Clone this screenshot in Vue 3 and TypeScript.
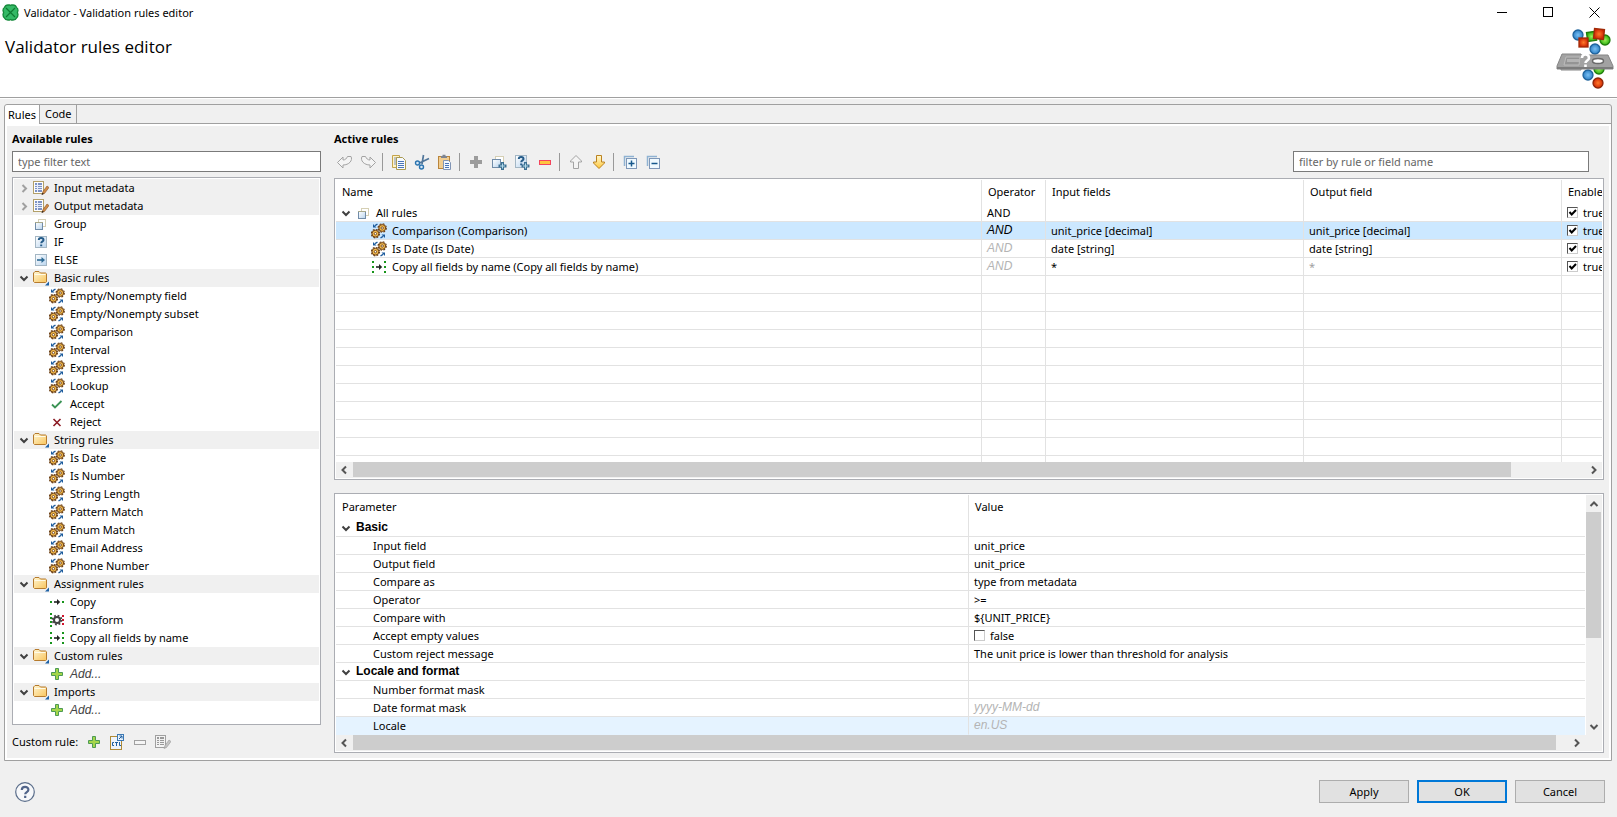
<script setup lang="ts">
import { ref } from 'vue'

interface TreeRow {
  label: string
  icon: string
  level: 0 | 1
  shaded?: boolean
  twisty?: 'open' | 'closed'
  italic?: boolean
}
interface ActiveRule {
  name: string
  icon: string
  root?: boolean
  operator: string
  opStyle?: string
  input: string
  output: string
  faintOutput?: boolean
  enabled: boolean
}
interface Param {
  label: string
  value?: string
  group?: boolean
  check?: boolean
  hint?: boolean
  hover?: boolean
}

const category = (label: string): TreeRow => ({ label, icon: 'folder', level: 0, shaded: true, twisty: 'open' })
const rule = (label: string, icon = 'gears'): TreeRow => ({ label, icon, level: 1 })
const adder = (): TreeRow => ({ label: 'Add...', icon: 'plus', level: 1, italic: true })

const tree: TreeRow[] = [
  { label: 'Input metadata', icon: 'meta', level: 0, shaded: true, twisty: 'closed' },
  { label: 'Output metadata', icon: 'meta', level: 0, shaded: true, twisty: 'closed' },
  { label: 'Group', icon: 'group', level: 0 },
  { label: 'IF', icon: 'if', level: 0 },
  { label: 'ELSE', icon: 'else', level: 0 },
  category('Basic rules'),
  rule('Empty/Nonempty field'),
  rule('Empty/Nonempty subset'),
  rule('Comparison'),
  rule('Interval'),
  rule('Expression'),
  rule('Lookup'),
  rule('Accept', 'accept'),
  rule('Reject', 'reject'),
  category('String rules'),
  rule('Is Date'),
  rule('Is Number'),
  rule('String Length'),
  rule('Pattern Match'),
  rule('Enum Match'),
  rule('Email Address'),
  rule('Phone Number'),
  category('Assignment rules'),
  rule('Copy', 'copyone'),
  rule('Transform', 'transform'),
  rule('Copy all fields by name', 'copyall'),
  category('Custom rules'),
  adder(),
  category('Imports'),
  adder(),
]

const rules = ref<ActiveRule[]>([
  { name: 'All rules', icon: 'group', root: true, operator: 'AND', input: '', output: '', enabled: true },
  { name: 'Comparison (Comparison)', icon: 'gears', operator: 'AND', opStyle: 'italic', input: 'unit_price [decimal]', output: 'unit_price [decimal]', enabled: true },
  { name: 'Is Date (Is Date)', icon: 'gears', operator: 'AND', opStyle: 'hint', input: 'date [string]', output: 'date [string]', enabled: true },
  { name: 'Copy all fields by name (Copy all fields by name)', icon: 'copyall', operator: 'AND', opStyle: 'hint', input: '*', output: '*', faintOutput: true, enabled: true },
])
const selected = ref(1)

const params: Param[] = [
  { label: 'Basic', group: true },
  { label: 'Input field', value: 'unit_price' },
  { label: 'Output field', value: 'unit_price' },
  { label: 'Compare as', value: 'type from metadata' },
  { label: 'Operator', value: '>=' },
  { label: 'Compare with', value: '${UNIT_PRICE}' },
  { label: 'Accept empty values', value: 'false', check: true },
  { label: 'Custom reject message', value: 'The unit price is lower than threshold for analysis' },
  { label: 'Locale and format', group: true },
  { label: 'Number format mask' },
  { label: 'Date format mask', value: 'yyyy-MM-dd', hint: true },
  { label: 'Locale', value: 'en.US', hint: true, hover: true },
]

const acceptEmpty = ref(false)
const treeFilter = ref('')
const ruleFilter = ref('')

const toolGroups: { icon: string; label: string; off?: boolean }[][] = [
  [{ icon: 'undo', label: 'Undo', off: true }, { icon: 'redo', label: 'Redo', off: true }],
  [{ icon: 'copy', label: 'Copy' }, { icon: 'cut', label: 'Cut' }, { icon: 'paste', label: 'Paste' }],
  [
    { icon: 'plusgrey', label: 'Add rule', off: true },
    { icon: 'addgroup', label: 'Add group' },
    { icon: 'addif', label: 'Add condition' },
    { icon: 'minusred', label: 'Remove' },
  ],
  [{ icon: 'up', label: 'Move up', off: true }, { icon: 'down', label: 'Move down' }],
  [{ icon: 'expand', label: 'Expand all' }, { icon: 'collapse', label: 'Collapse all' }],
]
const customTools = [
  { icon: 'plus', label: 'Add custom rule' },
  { icon: 'ctl', label: 'Open CTL' },
  { icon: 'minusgrey', label: 'Remove custom rule' },
  { icon: 'metagrey', label: 'Edit custom rule' },
]
</script>

<template>
  <svg class="defs" width="0" height="0" aria-hidden="true">
    <defs>
      <linearGradient id="g-folder" x1="0" y1="0" x2="1" y2="1">
        <stop offset="0" stop-color="#fff6d2" /><stop offset="1" stop-color="#f9c55d" />
      </linearGradient>
      <linearGradient id="g-gold" x1="0" y1="0" x2="0" y2="1">
        <stop offset="0" stop-color="#fff8d0" /><stop offset="1" stop-color="#ffc83a" />
      </linearGradient>
      <linearGradient id="g-blue" x1="0" y1="0" x2="1" y2="1">
        <stop offset="0" stop-color="#ffffff" /><stop offset="1" stop-color="#b9d4ee" />
      </linearGradient>
      <radialGradient id="r-red"><stop offset="0" stop-color="#ff7a2a" /><stop offset="1" stop-color="#cf2704" /></radialGradient>
      <radialGradient id="r-green"><stop offset="0" stop-color="#9bf05a" /><stop offset="1" stop-color="#2eb010" /></radialGradient>
      <radialGradient id="r-blue"><stop offset="0" stop-color="#79c0f4" /><stop offset="1" stop-color="#2d7fc4" /></radialGradient>
    </defs>
    <symbol id="i-open" viewBox="0 0 10 10"><path d="M1.500 3.500L5 7l3.500-3.500" fill="none" stroke="#404040" stroke-width="2" /></symbol>
    <symbol id="i-closed" viewBox="0 0 10 10"><path d="M3.500 2L7 5.500 3.500 9" fill="none" stroke="#a0a0a0" stroke-width="2" /></symbol>
    <symbol id="i-meta" viewBox="0 0 16 16">
      <rect x=".5" y="1.5" width="10" height="12" fill="#fff" stroke="#b3a069" />
      <path d="M2 3h7v9H2z" fill="#7d93c4" /><path d="M4.500 3v9M2 5.500h7M2 7.500h7M2 9.500h7" stroke="#e9eefa" />
      <path d="M9 14.500l1-3L14 6l2 1.500-4.500 6z" fill="#d08a45" stroke="#8a5427" stroke-width=".6" /><path d="M8.500 15l1-2.200 1.300 1z" fill="#222" />
    </symbol>
    <symbol id="i-metagrey" viewBox="0 0 16 16">
      <rect x=".5" y="1.500" width="10" height="12" fill="#f4f4f4" stroke="#a0a0a0" />
      <path d="M2 3h7v8H2z" fill="#999" /><path d="M4.500 3v8M2 5.500h7M2 7.500h7M2 9.500h7" stroke="#f0f0f0" />
      <path d="M9 14.500l1-3L14 6l2 1.500-4.500 6z" fill="#c4c4c4" stroke="#999" stroke-width=".6" />
    </symbol>
    <symbol id="i-group" viewBox="0 0 16 16">
      <rect x="5.500" y="3.500" width="7" height="7" fill="#fff" stroke="#d5cfb4" />
      <rect x="2.500" y="6.500" width="7" height="7" fill="url(#g-blue)" stroke="#718ca8" /><path d="M2 6.500h8" stroke="#a8a98d" />
    </symbol>
    <symbol id="i-if" viewBox="0 0 16 16">
      <rect x="2.500" y="2.500" width="11" height="11" fill="url(#g-blue)" stroke="#a3b6c4" />
      <path d="M5.800 6c0-3 4.700-2.400 4.700 0C10.500 7.500 8.300 7.200 8.200 9.200M8.200 10.500v1.700" fill="none" stroke="#245b88" stroke-width="2" />
    </symbol>
    <symbol id="i-else" viewBox="0 0 16 16">
      <rect x="2.500" y="2.500" width="11" height="11" fill="url(#g-blue)" stroke="#a3b6c4" />
      <path d="M4 8h6" stroke="#2d6a94" stroke-width="1.600" /><path d="M8.500 5l3.500 3-3.500 3z" fill="#2d6a94" />
    </symbol>
    <symbol id="i-folder" viewBox="0 0 16 16">
      <path d="M.5 11.500v-8.500l1.500-1.500h4l1.500 1.500h5l1 .8v8l-1 .7H1.500z" fill="url(#g-folder)" stroke="#b67b2d" />
      <path d="M1.500 4.500h11" stroke="#fffbe8" /><path d="M12 15.500h4v-4z" fill="#1c60a5" />
    </symbol>
    <symbol id="i-gears" viewBox="0 0 16 16">
      <g id="cog">
        <circle cx="11.200" cy="5" r="4.100" fill="none" stroke="#6e4116" stroke-width="1.200" stroke-dasharray="1.900 1.320" />
        <circle cx="11.200" cy="5" r="3.400" fill="#f3bb4c" stroke="#6e4116" stroke-width="1" />
        <circle cx="11.200" cy="5" r="1.200" fill="#fff" stroke="#6e4116" stroke-width=".9" />
      </g>
      <use href="#cog" x="-6.800" y="5.700" />
      <path d="M6.500 1L4 2.600" stroke="#1b5a9c" stroke-width="1.300" /><path d="M2 1v3.500h3.500z" fill="#1b5a9c" />
      <path d="M9.500 15l2.500-1.600" stroke="#1b5a9c" stroke-width="1.300" /><path d="M14 15v-3.500h-3.500z" fill="#1b5a9c" />
    </symbol>
    <symbol id="i-accept" viewBox="0 0 16 16"><path d="M3 8.500l3 3L12.500 5" fill="none" stroke="#3b9355" stroke-width="1.800" /></symbol>
    <symbol id="i-reject" viewBox="0 0 16 16"><path d="M4.500 5l7 7M11.500 5l-7 7" fill="none" stroke="#8c1b25" stroke-width="1.600" /></symbol>
    <symbol id="i-copyone" viewBox="0 0 16 16">
      <path d="M1 7h2v2H1zM13 7h2v2h-2z" fill="#17941b" /><path d="M5 8h4" stroke="#222" stroke-width="1.600" /><path d="M8 5l3.200 3L8 11z" fill="#222" />
    </symbol>
    <symbol id="i-copyall" viewBox="0 0 16 16">
      <path d="M1 2h2v2H1zM1 7h2v2H1zM1 12h2v2H1zM13 2h2v2h-2zM13 7h2v2h-2zM13 12h2v2h-2z" fill="#17941b" />
      <path d="M5 8h4" stroke="#222" stroke-width="1.600" /><path d="M8 5l3.200 3L8 11z" fill="#222" />
    </symbol>
    <symbol id="i-transform" viewBox="0 0 16 16">
      <path d="M1 1h2v2H1zM1 5h2v2H1zM1 9h2v2H1zM1 13h2v2H1z" fill="#17941b" /><path d="M13 3h2v2h-2zM13 7h2v2h-2zM13 11h2v2h-2z" fill="#d0142c" />
      <circle cx="8" cy="8" r="4.500" fill="none" stroke="#444" stroke-width="1.800" stroke-dasharray="1.770 1.770" /><circle cx="8" cy="8" r="3" fill="#fff" stroke="#444" stroke-width="2" />
    </symbol>
    <symbol id="i-plus" viewBox="0 0 16 16"><path d="M6.500 2.500h3v4h4v3h-4v4h-3v-4h-4v-3h4z" fill="#a5d64a" stroke="#4d9a55" /></symbol>
    <symbol id="i-plusgrey" viewBox="0 0 16 16"><path d="M6 2h4v4h4v4h-4v4H6v-4H2V6h4z" fill="#9c9c9c" /></symbol>
    <symbol id="i-minusgrey" viewBox="0 0 16 16"><rect x="2.500" y="6.500" width="11" height="4" fill="#f4f4f4" stroke="#a0a0a0" /></symbol>
    <symbol id="i-minusred" viewBox="0 0 16 16"><rect x="2.500" y="6.500" width="11" height="4" fill="#ffc540" stroke="#f4455d" /></symbol>
    <symbol id="i-ctl" viewBox="0 0 16 16">
      <rect x="1.500" y="2.500" width="11" height="13" fill="#eef4fc" stroke="#b08a35" />
      <path d="M5 8.500H3.500v3H5M6 8.500h3M7.500 8.500v3.500M10.500 8v3.500H12" fill="none" stroke="#1f5fa0" />
      <rect x="8.500" y=".5" width="6" height="6" fill="#e8f2fb" stroke="#3b78b4" /><path d="M10 5l3-3M10.500 2H13v2.500" fill="none" stroke="#1f5fa0" />
    </symbol>
    <symbol id="i-undo" viewBox="0 0 16 16"><path d="M.5 8.500L6 3v3c2.500 0 3.500-1.500 4.500-3.500h3.500C16 6.500 12 11 6 11v3z" fill="#f4f4f4" stroke="#a3a3a3" /></symbol>
    <symbol id="i-redo" viewBox="0 0 16 16"><path d="M15.500 8.500L10 3v3C7.500 6 6.500 4.500 5.500 2.500H2C0 6.500 4 11 10 11v3z" fill="#f4f4f4" stroke="#a3a3a3" /></symbol>
    <symbol id="i-copy" viewBox="0 0 16 16">
      <path d="M1.500 1.500h7v12h-7z" fill="#fff3c4" stroke="#c3a34c" /><path d="M3 4h3M3 6h3M3 8h3M3 10h3" stroke="#7d93c4" />
      <path d="M5.500 3.500h6l3 3v9h-9z" fill="#f6f9ff" stroke="#a99a52" /><path d="M7 7.500h6M7 9.500h6M7 11.500h6M7 13.500h6" stroke="#4976b8" />
    </symbol>
    <symbol id="i-cut" viewBox="0 0 16 16">
      <path d="M9.500 1L8 10M15 4.500L5.500 9" stroke="#52779b" stroke-width="1.700" /><circle cx="3.500" cy="9" r="2" fill="#d7e8f7" stroke="#2973af" stroke-width="1.400" /><circle cx="7.500" cy="13" r="2" fill="#d7e8f7" stroke="#2973af" stroke-width="1.400" />
    </symbol>
    <symbol id="i-paste" viewBox="0 0 16 16">
      <rect x="1.500" y="2.500" width="11" height="12" fill="#f1cd90" stroke="#b9853c" /><path d="M4 4V2h1.500V.8h3V2H10v2z" fill="#7e8591" />
      <path d="M6.500 6.500h5l2 2v7h-7z" fill="#f3f8ff" stroke="#8195b5" /><path d="M8 9.500h4M8 11.500h4M8 13.500h4" stroke="#4976b8" />
    </symbol>
    <symbol id="i-addgroup" viewBox="0 0 16 16">
      <rect x="4.500" y="2.500" width="8" height="8" fill="#fff" stroke="#d5cfb4" /><rect x="1.500" y="5.500" width="8" height="8" fill="url(#g-blue)" stroke="#718ca8" />
      <path d="M10 8h3v2.500h2.500v3H13V16h-3v-2.500H7.500v-3H10z" fill="#3d7193" /><path d="M11.500 9.500v5M9 12h5" stroke="#b5dbea" />
    </symbol>
    <symbol id="i-addif" viewBox="0 0 16 16">
      <rect x="1.500" y="1.500" width="11" height="12" fill="url(#g-blue)" stroke="#a3b6c4" />
      <path d="M4.800 5c0-3 4.700-2.400 4.700 0C9.500 6.500 7.200 6.200 7.200 8.200M7.200 9.500v1.700" fill="none" stroke="#245b88" stroke-width="2" />
      <path d="M10 8h3v2.500h2.500v3H13V16h-3v-2.500H7.500v-3H10z" fill="#3d7193" /><path d="M11.500 9.500v5M9 12h5" stroke="#b5dbea" />
    </symbol>
    <symbol id="i-up" viewBox="0 0 16 16"><path d="M8 1.500L13.500 7v1h-3v6.500h-5V8h-3V7z" fill="#f4f4f4" stroke="#a3a3a3" /></symbol>
    <symbol id="i-down" viewBox="0 0 16 16"><path d="M8 14.500L13.500 9V8h-3V1.500h-5V8h-3v1z" fill="url(#g-gold)" stroke="#bb8220" /></symbol>
    <symbol id="i-expand" viewBox="0 0 16 16">
      <path d="M2.500 12V2.500H12" fill="none" stroke="#8fb2d2" stroke-width="1.500" /><rect x="4.500" y="4.500" width="10" height="10" fill="#f0faff" stroke="#7e97b8" /><path d="M6.500 9.500h6M9.500 6.500v6" stroke="#17588c" stroke-width="1.500" />
    </symbol>
    <symbol id="i-collapse" viewBox="0 0 16 16">
      <path d="M2.500 12V2.500H12" fill="none" stroke="#8fb2d2" stroke-width="1.500" /><rect x="4.500" y="4.500" width="10" height="10" fill="#f0faff" stroke="#7e97b8" /><path d="M6.500 9.500h6" stroke="#17588c" stroke-width="1.500" />
    </symbol>
    <symbol id="i-tick" viewBox="0 0 11 11"><path d="M2.500 5l2.200 2.500L9 3" fill="none" stroke="#000" stroke-width="2" /></symbol>
  </svg>

  <div class="window">
    <header class="top">
      <div class="titlebar">
        <svg class="logo" viewBox="0 0 17 17" aria-hidden="true">
          <path d="M6 1h1.500l1 .6 1-.6H11c2 0 3 1 3.500 2.500C16 4 16 5.500 16 6.500l-.6 2 .6 2c0 1.500 0 2.500-1.500 3.500-.5 1.500-1.500 2-3.500 2H9.500l-1-.6-1 .6H6c-2 0-3-.5-3.500-2C1 13 1 12 1 10.500l.6-2-.6-2C1 5.500 1 4 2.500 3.500 3 2 4 1 6 1z" fill="#35b966" stroke="#168a3c" stroke-width="1.300" />
          <path d="M4 4l9 9M13 4l-9 9" stroke="#0e7a32" stroke-width="1.200" />
        </svg>
        <span class="caption">Validator - Validation rules editor</span>
        <button class="win" type="button" aria-label="Minimize"><svg viewBox="0 0 11 11"><path d="M0 5.500h10" stroke="#000" /></svg></button>
        <button class="win" type="button" aria-label="Maximize"><svg viewBox="0 0 11 11"><rect x=".5" y=".5" width="9" height="9" fill="none" stroke="#000" /></svg></button>
        <button class="win" type="button" aria-label="Close"><svg viewBox="0 0 11 11"><path d="M.5 .5l10 10M10.500 .5l-10 10" stroke="#000" /></svg></button>
      </div>
      <div class="banner">
        <h1>Validator rules editor</h1>
        <svg class="art" viewBox="0 0 58 64" aria-hidden="true">
          <g stroke-width="1.300">
            <circle cx="49" cy="14" r="5" fill="url(#r-green)" stroke="#1f7d0c" />
            <rect x="31" y="6" width="9" height="9" transform="rotate(-8 35 10)" fill="url(#r-green)" stroke="#1f7d0c" />
            <circle cx="22" cy="9" r="5" fill="url(#r-blue)" stroke="#1f639c" />
            <rect x="38" y="3" width="10" height="10" transform="rotate(6 43 8)" fill="url(#r-red)" stroke="#a02a08" />
            <rect x="23" y="12" width="9" height="9" fill="url(#r-red)" stroke="#a02a08" />
            <circle cx="39" cy="23" r="5" fill="url(#r-blue)" stroke="#1f639c" />
            <circle cx="43" cy="43" r="5" fill="url(#r-green)" stroke="#1f7d0c" />
            <circle cx="32" cy="49" r="5" fill="url(#r-blue)" stroke="#1f639c" />
            <circle cx="42" cy="57" r="5" fill="url(#r-red)" stroke="#8c2508" />
          </g>
          <path d="M6 28h19v1h27l5 11v3H25v1H5v-1H1v-3z" fill="#a2a2a2" stroke="#858585" /><path d="M1 41h56v2H1z" fill="#7c7c7c" />
          <path d="M10 31h14l-1 8H8z" fill="#949494" stroke="#bcbcbc" /><path d="M11 33h12v3H11z" fill="#b4b4b4" />
          <ellipse cx="42" cy="35" rx="5.500" ry="2.500" fill="#fff" stroke="#6a6a6a" stroke-width="1.500" />
          <path d="M26 32c0-5 7-4.500 7 0 0 2.500-3.500 2.500-3.500 5M29.500 38.500v2.500" fill="none" stroke="#fff" stroke-width="2.600" />
        </svg>
      </div>
    </header>

    <main class="folder">
      <nav class="tabs" role="tablist">
        <button class="tab on" type="button" role="tab" aria-selected="true">Rules</button>
        <button class="tab" type="button" role="tab" aria-selected="false">Code</button>
      </nav>
      <div class="body">
        <section class="left">
          <h2>Available rules</h2>
          <div class="bar">
            <input v-model="treeFilter" class="field" type="text" placeholder="type filter text" aria-label="Filter available rules" />
          </div>
          <ul class="tree">
            <li v-for="(row, i) in tree" :key="i" :class="{ shaded: row.shaded, child: row.level === 1 }">
              <svg class="twisty" aria-hidden="true"><use v-if="row.twisty" :href="'#i-' + row.twisty" /></svg>
              <svg class="icon" aria-hidden="true"><use :href="'#i-' + row.icon" /></svg>
              <span :class="{ add: row.italic }">{{ row.label }}</span>
            </li>
          </ul>
          <div class="custom">
            <span>Custom rule:</span>
            <button v-for="t in customTools" :key="t.icon" class="tool" type="button" :aria-label="t.label">
              <svg class="icon" aria-hidden="true"><use :href="'#i-' + t.icon" /></svg>
            </button>
          </div>
        </section>

        <section class="right">
          <h2>Active rules</h2>
          <div class="bar">
            <div v-for="(g, gi) in toolGroups" :key="gi" class="group">
              <button v-for="t in g" :key="t.icon" class="tool" type="button" :aria-label="t.label" :disabled="t.off">
                <svg class="icon" aria-hidden="true"><use :href="'#i-' + t.icon" /></svg>
              </button>
            </div>
            <input v-model="ruleFilter" class="field search" type="text" placeholder="filter by rule or field name" aria-label="Filter active rules" />
          </div>

          <div class="pane">
            <table class="grid">
              <colgroup><col /><col class="c-op" /><col class="c-field" /><col class="c-field" /><col class="c-on" /></colgroup>
              <thead>
                <tr><th>Name</th><th>Operator</th><th>Input fields</th><th>Output field</th><th>Enabled</th></tr>
              </thead>
              <tbody>
                <tr v-for="(r, i) in rules" :key="r.name" :class="{ selected: i === selected }" @click="selected = i">
                  <td>
                    <div class="name" :class="{ child: !r.root }">
                      <svg class="twisty" aria-hidden="true"><use v-if="r.root" href="#i-open" /></svg>
                      <svg class="icon" aria-hidden="true"><use :href="'#i-' + r.icon" /></svg>
                      <span>{{ r.name }}</span>
                    </div>
                  </td>
                  <td><span :class="r.opStyle">{{ r.operator }}</span></td>
                  <td>{{ r.input }}</td>
                  <td><span :class="{ faint: r.faintOutput }">{{ r.output }}</span></td>
                  <td>
                    <label class="check">
                      <span class="box"><input v-model="r.enabled" type="checkbox" /><svg v-if="r.enabled" aria-hidden="true"><use href="#i-tick" /></svg></span>
                      {{ r.enabled }}
                    </label>
                  </td>
                </tr>
                <tr v-for="n in 10" :key="'e' + n"><td></td><td></td><td></td><td></td><td></td></tr>
                <tr class="tail"><td></td><td></td><td></td><td></td><td></td></tr>
              </tbody>
            </table>
            <div class="hscroll">
              <button type="button" aria-label="Scroll left"><svg viewBox="0 0 10 10"><path d="M6 1.500L2.500 5 6 8.500" /></svg></button>
              <div class="track"><div class="thumb wide"></div></div>
              <button type="button" aria-label="Scroll right"><svg viewBox="0 0 10 10"><path d="M3 1.500L6.500 5 3 8.500" /></svg></button>
            </div>
          </div>

          <div class="pane lower">
            <div class="split">
              <table class="grid">
                <colgroup><col class="c-param" /><col /></colgroup>
                <thead>
                  <tr><th>Parameter</th><th>Value</th></tr>
                </thead>
                <tbody>
                  <tr v-for="p in params" :key="p.label" :class="{ hover: p.hover }">
                    <td>
                      <div v-if="p.group" class="name"><svg class="twisty" aria-hidden="true"><use href="#i-open" /></svg><strong>{{ p.label }}</strong></div>
                      <div v-else class="param">{{ p.label }}</div>
                    </td>
                    <td>
                      <label v-if="p.check" class="check"><span class="box"><input v-model="acceptEmpty" type="checkbox" /><svg v-if="acceptEmpty" aria-hidden="true"><use href="#i-tick" /></svg></span>{{ acceptEmpty }}</label>
                      <span v-else :class="{ hint: p.hint }">{{ p.value }}</span>
                    </td>
                  </tr>
                </tbody>
              </table>
              <div class="vscroll">
                <button type="button" aria-label="Scroll up"><svg viewBox="0 0 10 10"><path d="M1.500 7L5 3.500 8.500 7" /></svg></button>
                <div class="track"><div class="thumb"></div></div>
                <button type="button" aria-label="Scroll down"><svg viewBox="0 0 10 10"><path d="M1.500 3L5 6.500 8.500 3" /></svg></button>
              </div>
            </div>
            <div class="hscroll cornered">
              <button type="button" aria-label="Scroll left"><svg viewBox="0 0 10 10"><path d="M6 1.500L2.500 5 6 8.500" /></svg></button>
              <div class="track"><div class="thumb full"></div></div>
              <button type="button" aria-label="Scroll right"><svg viewBox="0 0 10 10"><path d="M3 1.500L6.500 5 3 8.500" /></svg></button>
            </div>
          </div>
        </section>
      </div>
    </main>

    <footer class="footer">
      <button class="help" type="button" aria-label="Help">
        <svg viewBox="0 0 20 20"><circle cx="10" cy="10" r="9.300" fill="#f7f8fa" stroke="#5a6d8a" stroke-width="1.200" /><path d="M6.800 8c0-4.200 6.600-4 6.600-.3 0 2.400-3.200 2.300-3.200 4.600M10.200 13.800v2.200" fill="none" stroke="#52658a" stroke-width="2.200" /></svg>
      </button>
      <button class="btn" type="button">Apply</button>
      <button class="btn default" type="button">OK</button>
      <button class="btn" type="button">Cancel</button>
    </footer>
  </div>
</template>

<style>
body { margin: 0; background: #f0f0f0; }
</style>

<style scoped>
.defs { position: absolute; }
.window { box-sizing: border-box; display: flex; flex-direction: column; min-height: 100vh; background: #f0f0f0; color: #000; font: 11px/16px "Noto Sans", "Open Sans", sans-serif; }
.window *, .window *::before { box-sizing: border-box; }
button, input { font: inherit; color: inherit; margin: 0; }
button { padding: 0; border: 0; background: none; }
svg { display: block; flex: none; }
h1, h2, ul { margin: 0; padding: 0; }

.top { height: 99px; background: #fff; border-bottom: 1px solid #fff; box-shadow: inset 0 -1px #a0a0a0; }
.titlebar { display: flex; align-items: center; height: 25px; padding-left: 2px; }
.logo { width: 17px; height: 17px; }
.caption { flex: 1; padding-left: 5px; }
.win { display: grid; place-items: center; width: 46px; height: 25px; }
.win svg { width: 11px; height: 11px; }
.banner { display: flex; justify-content: space-between; padding: 1px 3px 0 5px; }
h1 { padding-top: 9px; font-family: "Open Sans", "Noto Sans", sans-serif; font-size: 17px; font-weight: 400; line-height: 24px; }
.art { width: 58px; height: 64px; }

.folder { flex: 1; display: flex; flex-direction: column; margin: 5px 5px 0 4px; border: 1px solid #a0a0a0; border-radius: 3px 3px 0 0; }
.tabs { display: flex; height: 19px; border-bottom: 1px solid #a0a0a0; }
.tab { height: 18px; padding: 0 4px 0 5px; border-right: 1px solid #a0a0a0; line-height: 18px; }
.tab.on { height: 19px; padding: 0 3px; background: #fff; border-radius: 3px 0 0 0; }
.body { flex: 1; display: grid; grid-template-columns: 309px minmax(0, 1fr); gap: 13px; padding: 5px; border: 2px solid #fff; }
.left, .right { display: flex; flex-direction: column; min-width: 0; }
h2 { height: 20px; font-size: 11px; font-weight: 700; line-height: 16px; }
.bar { display: flex; align-items: center; height: 21px; }
.field { flex: 1; min-width: 0; height: 21px; padding: 0 5px; border: 1px solid #7a7a7a; background: #fff; outline: 0; border-radius: 0; }
.field::placeholder { color: #666; opacity: 1; }

.tree { flex: 1; margin-top: 5px; padding: 1px 1px 5px; list-style: none; background: #fff; border: 1px solid #abadb3; }
.tree li { display: flex; align-items: center; height: 18px; padding-left: 5px; white-space: pre; }
.tree li.shaded { background: #f0f0f0; }
.twisty { width: 10px; height: 10px; }
.icon { width: 16px; height: 16px; }
.tree .icon { margin: 0 5px 0 4px; }
.tree .child .icon { margin-left: 20px; }
.add { font-family: "Liberation Sans", Arial, sans-serif; font-size: 12px; font-style: italic; color: #444; }
.custom { display: flex; align-items: center; gap: 7px; height: 28px; padding-top: 5px; }
.custom span { margin-right: 1px; }
.tool { display: block; width: 16px; height: 16px; }

.group { display: flex; gap: 7px; align-items: center; height: 18px; padding: 0 6px 0 8px; border-left: 1px solid #999; }
.group:first-child { border-left: 0; padding-left: 3px; }
.search { flex: 0 1 296px; margin-left: auto; margin-right: 15px; }

.pane { margin-top: 6px; padding: 1px; background: #fff; border: 1px solid #abadb3; }
.lower { margin-top: 13px; }
.grid { width: 100%; table-layout: fixed; border-collapse: separate; border-spacing: 0; }
.c-op { width: 64px; }
.c-field { width: 258px; }
.c-on { width: 41px; }
.c-param { width: 632px; }
.grid th, .grid td { overflow: hidden; padding: 0 0 0 5px; text-align: left; white-space: nowrap; font-weight: 400; }
.grid th { height: 24px; padding-left: 6px; }
.grid td { height: 18px; border-bottom: 1px solid #e2e2e2; line-height: 17px; }
.grid td > span { display: block; }
.grid th + th, .grid td + td { border-left: 1px solid #e2e2e2; }
.grid .tail td { height: 6px; border-bottom: 0; }
.selected td { background: #cce8ff; }
.hover td { background: #e5f3ff; border-bottom-color: #e5f3ff; }
.name { display: flex; align-items: center; height: 17px; }
.name .twisty { margin-right: 5px; }
.name .icon { margin-right: 4px; }
.name.child .icon { margin-left: 15px; margin-right: 5px; }
.param { padding-left: 32px; }
.italic, .hint { font-family: "Liberation Sans", Arial, sans-serif; font-size: 12px; font-style: italic; }
.hint { color: #b4b4b4; }
.faint { color: #a0a0a0; }
strong { font-family: "Liberation Sans", Arial, sans-serif; font-size: 12px; }
.check { display: flex; align-items: center; gap: 5px; height: 17px; }
.box { display: grid; width: 11px; height: 11px; flex: none; }
.box > * { grid-area: 1 / 1; width: 11px; height: 11px; }
.box input { appearance: none; border: 1px solid; border-color: #555 #ccc #ccc #555; background: #fff; }
.box svg { pointer-events: none; }

.split { display: flex; }
.split .grid { flex: 1; min-width: 0; width: 0; }
.hscroll { display: flex; height: 16px; background: #f0f0f0; }
.hscroll button, .vscroll button { display: grid; place-items: center; flex: none; width: 17px; height: 17px; }
.hscroll button { height: 16px; }
.hscroll svg, .vscroll svg { width: 10px; height: 10px; fill: none; stroke: #555; stroke-width: 2; }
.vscroll button { width: 16px; }
.track { flex: 1; }
.thumb { background: #cdcdcd; }
.hscroll .thumb { height: 15px; }
.wide { width: 94%; }
.full { width: 99%; }
.cornered { padding-right: 17px; }
.vscroll { display: flex; flex-direction: column; width: 16px; margin-left: 1px; background: #f0f0f0; }
.vscroll .track { height: 0; }
.vscroll .thumb { height: 61%; width: 15px; }

.footer { display: flex; align-items: center; gap: 8px; padding: 19px 12px 14px 15px; }
.help { margin-right: auto; }
.help svg { width: 20px; height: 20px; }
.btn { width: 90px; height: 23px; border: 1px solid #adadad; background: #e1e1e1; }
.btn.default { border: 2px solid #0078d7; }
</style>
